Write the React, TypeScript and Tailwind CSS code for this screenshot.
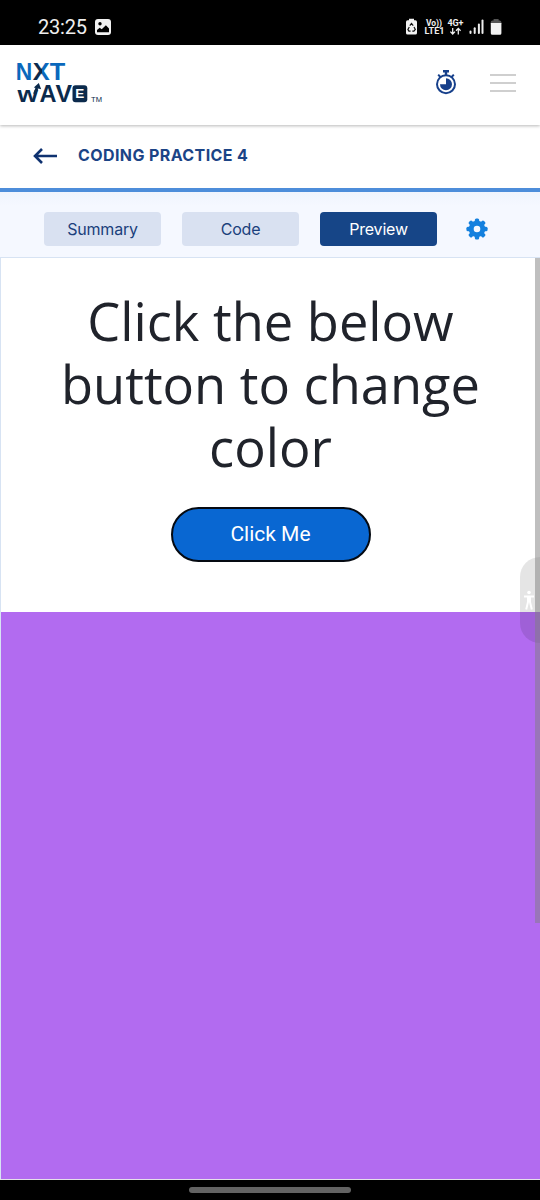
import React from 'react';
import clsx from 'clsx';

const tabs = [
  { label: 'Summary', active: false },
  { label: 'Code', active: false },
  { label: 'Preview', active: true },
];

function StatusBar() {
  return (
    <div className="h-[45px] bg-black flex items-center justify-between pl-[38px] pr-[37px] pt-[9px] font-['Roboto',sans-serif]">
      <div className="flex items-center gap-[8px]">
        <span className="text-[20px] leading-none tracking-[-0.2px] text-[#eeeeee]">23:25</span>
        <svg width="16" height="16" viewBox="0 0 16 16">
          <rect width="16" height="16" rx="3" fill="#f2f2f2" />
          <circle cx="5" cy="4.8" r="1.7" fill="#000" />
          <path d="M2 13.3V11l2.7-2.3 2 1.5 4.2-4 3.1 3.2v3.9z" fill="#000" />
        </svg>
      </div>
      <svg width="98" height="20" viewBox="405 17 98 20" className="font-['Roboto',sans-serif]">
        <path d="M409 20.3v-1.6h5v1.6h1.4a1.6 1.6 0 0 1 1.6 1.6v11a1.6 1.6 0 0 1-1.6 1.6h-7.8a1.6 1.6 0 0 1-1.6-1.6v-11a1.6 1.6 0 0 1 1.6-1.6z" fill="#f2f2f2" />
        <path d="M409.8 25.6l1.7-2.2 1.7 2.2M414 27l1.3 2.4-1.4 1.7h-1.6M410.6 31.1h-1.7l-1-1.7 1.4-2.4" fill="none" stroke="#111" strokeWidth="1.2" />
        <text x="426" y="25.8" fontSize="8.5" fontWeight="700" fill="#eee" textLength="16">Vo))</text>
        <text x="424.5" y="34.3" fontSize="9" fontWeight="700" fill="#eee" textLength="20">LTE1</text>
        <text x="447.5" y="26" fontSize="9" fontWeight="700" fill="#eee" textLength="16">4G+</text>
        <path d="M452.7 28v6M450.4 31.6l2.3 2.4 2.3-2.4M458.3 34.4v-6M456 30.8l2.3-2.4 2.3 2.4" fill="none" stroke="#eee" strokeWidth="1.3" />
        <g fill="#eeeeee">
          <rect x="469.5" y="30.5" width="2" height="3.5" rx="1" />
          <rect x="473.7" y="27.3" width="2" height="6.7" rx="1" />
          <rect x="477.9" y="23.6" width="2" height="10.4" rx="1" />
          <rect x="481.5" y="19.5" width="2" height="14.5" rx="1" />
        </g>
        <path d="M493.6 20.5v-1.6h5v1.6h1a1.8 1.8 0 0 1 1.8 1.8V24h-10.6v-1.7a1.8 1.8 0 0 1 1.8-1.8z" fill="#555" />
        <path d="M490.8 23h10.6v10.2a1.5 1.5 0 0 1-1.5 1.5h-7.6a1.5 1.5 0 0 1-1.5-1.5z" fill="#f2f2f2" />
      </svg>
    </div>
  );
}

function Logo() {
  return (
    <svg width="88" height="54" viewBox="16 56 88 54" className="font-['Liberation_Sans',sans-serif]">
      <defs>
        <linearGradient id="cross" x1="0" x2="1" y1="0" y2="0">
          <stop offset="0.5" stopColor="#0b2a4c" />
          <stop offset="0.5" stopColor="#0a68bc" />
        </linearGradient>
      </defs>
      <g fontSize="24.5" fontWeight="700">
        <text x="15.8" y="79.6" fill="#0a68bc" textLength="16.5" lengthAdjust="spacingAndGlyphs">N</text>
        <text x="32.8" y="79.6" fill="url(#cross)" textLength="17" lengthAdjust="spacingAndGlyphs">X</text>
        <text x="49.8" y="79.6" fill="#0a68bc" textLength="15.5" lengthAdjust="spacingAndGlyphs">T</text>
        <text x="39.4" y="102.2" fill="#0b2a4c" textLength="17" lengthAdjust="spacingAndGlyphs">A</text>
        <text x="55.6" y="102.2" fill="#0b2a4c" textLength="16.5" lengthAdjust="spacingAndGlyphs">V</text>
      </g>
      <text x="17.5" y="102.2" fontSize="22" fontWeight="700" fill="#0b2a4c" textLength="20.5" lengthAdjust="spacingAndGlyphs">w</text>
      <path d="M34.6 94l2.4-6" stroke="#0b2a4c" strokeWidth="3" />
      <path d="M33.8 87.6l5-4.6 2.4 6.2z" fill="#0b2a4c" />
      <rect x="72.5" y="85.2" width="14.8" height="17" rx="3" fill="#0b2a4c" />
      <text x="75.2" y="98.4" fontSize="13.5" fontWeight="700" fill="#fff">E</text>
      <text x="91" y="102.4" fontSize="7.5" fill="#0b2a4c" textLength="11" lengthAdjust="spacingAndGlyphs">TM</text>
    </svg>
  );
}

function StopwatchIcon() {
  return (
    <svg width="22" height="25" viewBox="0 0 22 25" fill="none" stroke="#17408b">
      <circle cx="11" cy="14.2" r="9" strokeWidth="2" />
      <path d="M8 1.2h6M11 1.5v4" strokeWidth="2.4" />
      <path d="M3.2 4.6l2.4 2.6M18.8 4.6l-2.4 2.6" strokeWidth="2" />
      <path d="M11 8.3v6H5a6 6 0 1 0 6-6z" fill="#17408b" stroke="none" />
    </svg>
  );
}

function GearIcon() {
  const teeth = [0, 45, 90, 135, 180, 225, 270, 315];
  return (
    <svg width="22" height="22" viewBox="-11 -11 22 22" fill="#1480de">
      {teeth.map((angle) => (
        <rect key={angle} x="-2.2" y="-10.6" width="4.4" height="6" rx="1.5" transform={`rotate(${angle})`} />
      ))}
      <circle r="5.8" fill="none" stroke="#1480de" strokeWidth="5" />
    </svg>
  );
}

function Header() {
  return (
    <header className="h-[80px] bg-white flex items-center justify-between pl-[16px] pr-[24px] pb-[5px] relative z-10 shadow-[0_1px_3px_rgba(0,0,0,0.28)]">
      <Logo />
      <div className="flex items-center gap-[33px]">
        <StopwatchIcon />
        <div className="flex flex-col gap-[6px] w-[26px]">
          <span className="h-[2px] bg-[#cfcfcf]"></span>
          <span className="h-[2px] bg-[#cfcfcf]"></span>
          <span className="h-[2px] bg-[#cfcfcf]"></span>
        </div>
      </div>
    </header>
  );
}

function TabBar() {
  return (
    <div className="h-[66px] bg-[linear-gradient(#f0f4fd,#f5f8ff_14px)] border-b border-[#d7e3f3] flex items-start pt-[20px] pl-[44px] gap-[21px]">
      {tabs.map((tab) => (
        <button
          key={tab.label}
          className={clsx(
            "w-[117px] h-[34px] rounded-[4px] text-[16px] tracking-[-0.2px] font-['Inter',sans-serif]",
            tab.active ? 'bg-[#164587] text-white' : 'bg-[#d9e1f1] text-[#1b3f7c]'
          )}
        >
          {tab.label}
        </button>
      ))}
      <div className="pt-[6px] pl-[8px]">
        <GearIcon />
      </div>
    </div>
  );
}

export default function App() {
  return (
    <div className="w-[540px] h-[1200px] bg-white flex flex-col overflow-hidden">
      <StatusBar />
      <Header />

      <div className="h-[67px] border-b-[4px] border-[#4d8dda] flex items-center pl-[33px] gap-[21px] pb-[2px]">
        <svg width="24" height="16" viewBox="0 0 24 16" fill="none" stroke="#0f3270" strokeWidth="2.6">
          <path d="M24 8H2M9 1L2 8l7 7" />
        </svg>
        <h1 className="font-['Inter',sans-serif] text-[16px] font-bold tracking-[0.4px] text-[#1b4486] pb-[2px]">CODING PRACTICE 4</h1>
      </div>

      <TabBar />

      <main className="relative flex-1 flex flex-col border-l border-[#d7e3f3]">
        <div className="h-[354px] flex flex-col items-center pt-[31px]">
          <h2 className="w-[440px] text-center font-['Open_Sans',sans-serif] text-[52.4px] leading-[63px] text-[#20232b]">
            Click the below button to change color
          </h2>
          <button className="mt-[29px] w-[200px] h-[55px] rounded-full border-2 border-[#050a12] bg-[#0967d2] text-white text-[21px] font-['Roboto',sans-serif]">
            Click Me
          </button>
        </div>
        <div className="flex-1 bg-[#b26bf0]"></div>

        {/* accessibility handle */}
        <div className="absolute right-0 top-[299px] w-[20px] h-[86px] rounded-l-[20px] bg-black/10 flex items-center pl-[4px]">
          <svg width="10" height="20" viewBox="0 0 10 20" fill="none" stroke="#fff" strokeWidth="2">
            <circle cx="5" cy="2.5" r="1.8" fill="#fff" stroke="none" />
            <path d="M0 6.5h10" />
            <path d="M4 6v6l-1.8 7.5M6 6v6l1.8 7.5" />
          </svg>
        </div>
        <div className="absolute right-0 top-0 w-[5px] h-[665px] bg-[#808080]/50"></div>
      </main>

      <div className="h-[21px] bg-black border-t border-[#e6e1ea] flex justify-center pt-[7px]">
        <div className="w-[162px] h-[6px] rounded-full bg-[#636363]"></div>
      </div>
    </div>
  );
}
